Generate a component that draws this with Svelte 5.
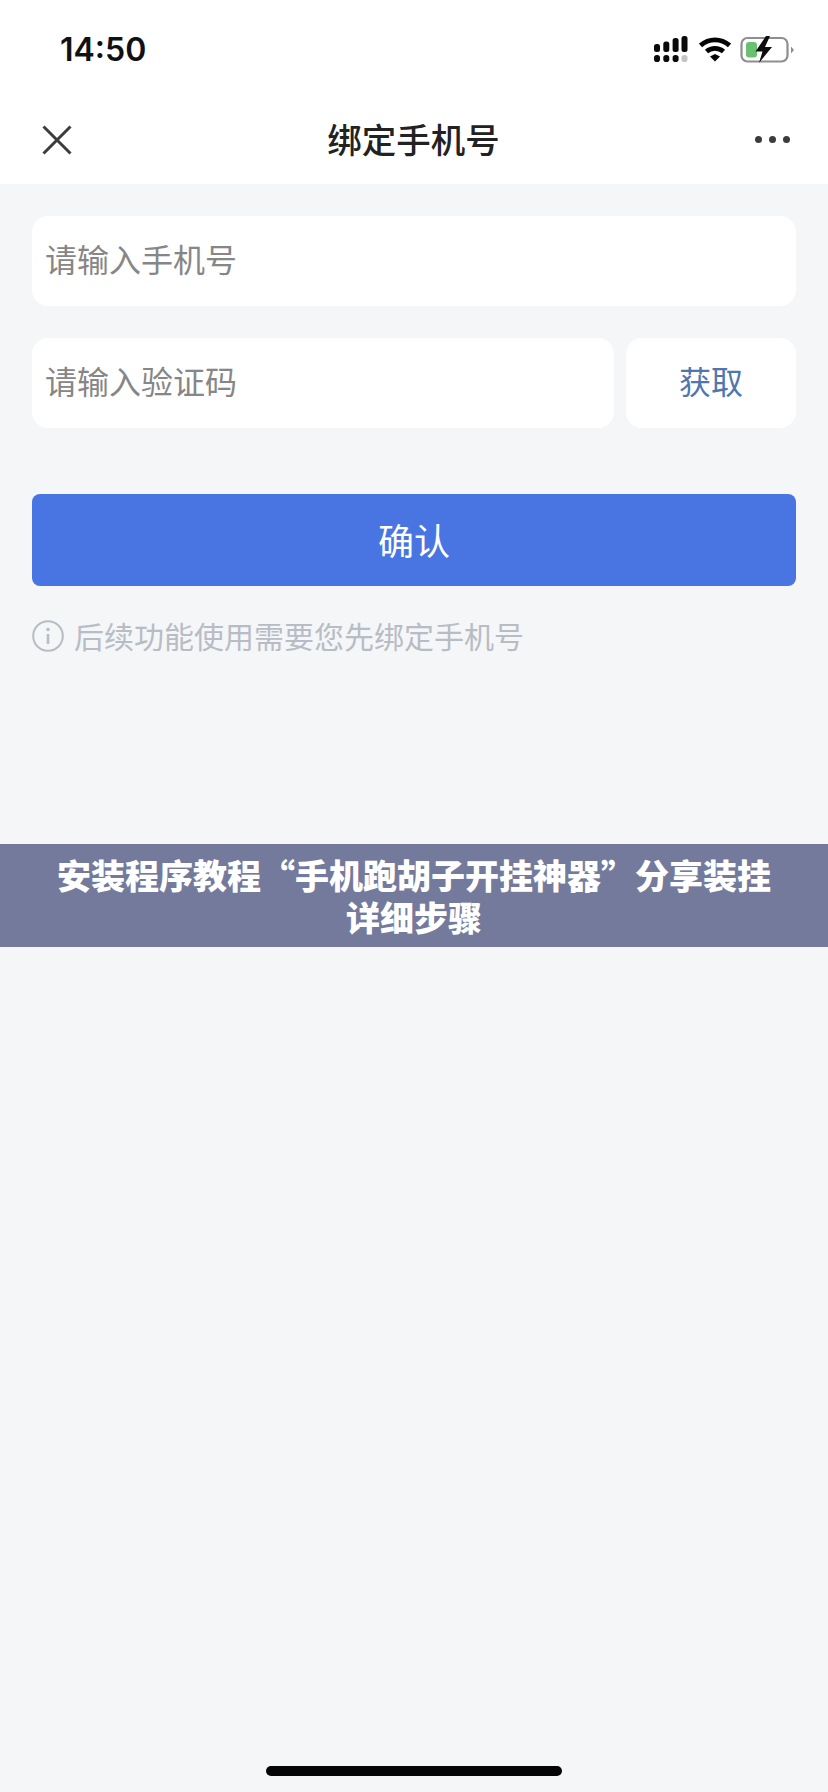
<script>
  const cols = [
    { x: 0, top: 8 },
    { x: 9.300, top: 5.500 },
    { x: 18.600, top: 2 },
    { x: 27.500, top: 0 }
  ];
</script>

<div class="page">
  <header class="head">
    <div class="status">
      <span class="time">14:50</span>
      <div class="icons">
        <svg class="signal" width="34" height="27" viewBox="0 0 34 27" aria-hidden="true">
          {#each cols as c, i}
            <rect x={c.x} y={c.top} width="6" height={16 - c.top} rx="2.500" fill="#0a0a0a" />
            <rect x={c.x} y="19" width="6" height="7" rx="2.800" fill={i === 3 ? '#c4c4c4' : '#0a0a0a'} />
          {/each}
        </svg>
        <svg class="wifi" width="32" height="26" viewBox="0 0 32 26" aria-hidden="true">
          <path d="M1.500 9.500C10 2 22 2 30.500 9.500" fill="none" stroke="#050505" stroke-width="4.800" />
          <path d="M7.500 15.500C12.500 11.300 19.500 11.300 24.500 15.500" fill="none" stroke="#050505" stroke-width="4.800" />
          <path d="M11 20.500L16 18 21 20.500 16 25.500Z" fill="#050505" />
        </svg>
        <svg class="battery" width="54" height="28" viewBox="0 0 54 28" aria-hidden="true">
          <rect x="1.500" y="2" width="46" height="23.500" rx="6" fill="none" stroke="#8e8e8e" stroke-width="2.200" />
          <rect x="6" y="6" width="11" height="15.500" rx="3" fill="#69c16f" />
          <path d="M51 10.500L54 14 51 17.500Z" fill="#8e8e8e" />
          <path d="M26 0L15.500 15.500H22.500L19 27 32 11H25L30 0Z" fill="#0d0d0d" />
        </svg>
      </div>
    </div>
    <nav class="nav">
      <svg class="close" width="30" height="30" viewBox="0 0 30 30" aria-hidden="true">
        <path d="M1.500 1.500L28.500 28.500M28.500 1.500L1.500 28.500" stroke="#3d3d3d" stroke-width="3" fill="none" />
      </svg>
      <h1 class="title">绑定手机号</h1>
      <div class="more"><i></i><i></i><i></i></div>
    </nav>
  </header>

  <main class="form">
    <div class="field">请输入手机号</div>
    <div class="row">
      <div class="field grow">请输入验证码</div>
      <div class="get">获取</div>
    </div>
    <div class="confirm">确认</div>
    <p class="hint">
      <svg width="32" height="32" viewBox="0 0 32 32" aria-hidden="true">
        <circle cx="16" cy="16" r="14.800" fill="none" stroke="#b8bcc4" stroke-width="2" />
        <circle cx="16" cy="9.500" r="1.800" fill="#b8bcc4" />
        <path d="M16 14V24" stroke="#b8bcc4" stroke-width="2.600" />
      </svg>
      <span>后续功能使用需要您先绑定手机号</span>
    </p>
  </main>

  <div class="banner">安装程序教程“手机跑胡子开挂神器”分享装挂<br />详细步骤</div>

  <div class="home"></div>
</div>

<style>
  :global(body) {
    margin: 0;
    background: #f4f6f8;
  }
  .page {
    position: relative;
    width: 828px;
    height: 1792px;
    background: #f4f6f8;
    font-family: "Noto Sans CJK SC", "Noto Sans", sans-serif;
    overflow: hidden;
  }
  .head {
    background: #fff;
    height: 184px;
  }
  .status {
    height: 94px;
    display: flex;
    align-items: flex-start;
    justify-content: space-between;
    padding: 0 34px 0 60px;
    box-sizing: border-box;
  }
  .time {
    font-family: Inter, "Liberation Sans", sans-serif;
    font-weight: 600;
    font-size: 32px;
    line-height: 40px;
    margin-top: 30px;
    color: #111;
  }
  .icons {
    display: flex;
    align-items: flex-start;
    margin-top: 36px;
  }
  .wifi { margin-left: 11px; }
  .battery { margin-left: 9px; }
  .nav {
    height: 90px;
    display: flex;
    align-items: center;
    justify-content: space-between;
    padding: 0 38px 0 42px;
  }
  .close { margin-top: 1px; }
  .title {
    margin: -3px 0 0;
    font-size: 34.500px;
    line-height: 48px;
    font-weight: 500;
    color: #222;
  }
  .more {
    display: flex;
    gap: 7px;
    margin-top: 1px;
  }
  .more i {
    width: 7px;
    height: 7px;
    border-radius: 50%;
    background: #3c3c3c;
  }
  .form {
    padding: 32px 32px 0;
  }
  .field {
    height: 90px;
    background: #fff;
    border-radius: 16px;
    padding-left: 13px;
    font-size: 32px;
    line-height: 85px;
    color: #868686;
  }
  .row {
    display: flex;
    gap: 12px;
    margin-top: 32px;
  }
  .grow {
    flex: 1;
  }
  .get {
    width: 170px;
    height: 90px;
    background: #fff;
    border-radius: 16px;
    text-align: center;
    font-size: 32px;
    line-height: 85px;
    color: #4f76ad;
  }
  .confirm {
    height: 92px;
    margin-top: 66px;
    background: #4975e3;
    border-radius: 8px;
    text-align: center;
    font-size: 36px;
    line-height: 90px;
    color: #fff;
  }
  .hint {
    display: flex;
    align-items: center;
    gap: 10px;
    margin: 34px 0 0;
    font-size: 30px;
    line-height: 34px;
    color: #b8bcc4;
  }
  .hint span {
    margin-top: -2px;
  }
  .banner {
    margin-top: 192px;
    height: 103px;
    padding-top: 10px;
    box-sizing: border-box;
    background: #747a9b;
    color: #fff;
    text-align: center;
    font-size: 34px;
    line-height: 42px;
    font-weight: 900;
  }
  .home {
    position: absolute;
    left: 266px;
    bottom: 16px;
    width: 296px;
    height: 10px;
    border-radius: 5px;
    background: #050507;
  }
</style>
